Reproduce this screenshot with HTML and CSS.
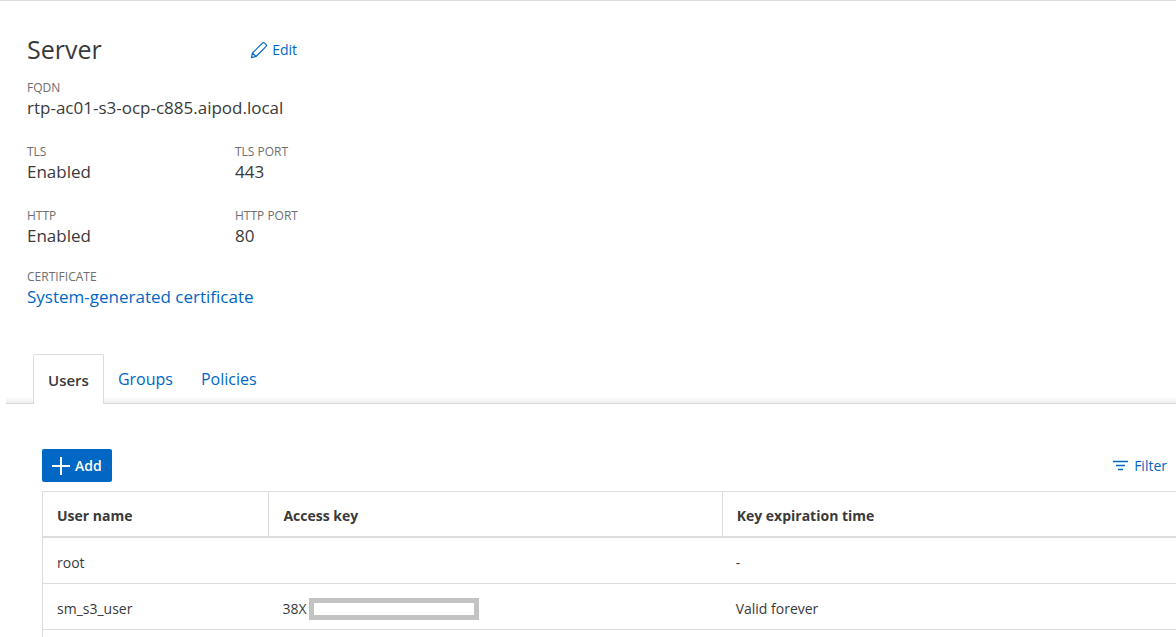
FILE: index.html
```html
<!DOCTYPE html>
<html lang="en">
<head>
<meta charset="utf-8">
<title>Server</title>
<link rel="stylesheet" href="styles.css">
</head>
<body>
<main class="page">
  <section class="server">
    <header class="server-head">
      <h1 class="title">Server</h1>
      <button class="link-button" type="button">
        <svg class="icon-edit" viewBox="0 0 18 18" aria-hidden="true"><path d="M1.4 16.6 2.5 12 12.4 2.1a1.6 1.6 0 0 1 2.2 0l1.3 1.3a1.6 1.6 0 0 1 0 2.2L6 15.5ZM2.5 12 6 15.5"/></svg>
        <span>Edit</span>
      </button>
    </header>
    <dl class="details">
      <div class="field wide"><dt>FQDN</dt><dd>rtp-ac01-s3-ocp-c885.aipod.local</dd></div>
      <div class="field"><dt>TLS</dt><dd>Enabled</dd></div>
      <div class="field"><dt>TLS PORT</dt><dd>443</dd></div>
      <div class="field"><dt>HTTP</dt><dd>Enabled</dd></div>
      <div class="field"><dt>HTTP PORT</dt><dd>80</dd></div>
      <div class="field wide"><dt>CERTIFICATE</dt><dd><a class="link" href="#certificate">System-generated certificate</a></dd></div>
    </dl>
  </section>

  <div class="tabs" role="tablist">
    <button class="tab active" type="button" role="tab" aria-selected="true">Users</button>
    <button class="tab" type="button" role="tab" aria-selected="false">Groups</button>
    <button class="tab" type="button" role="tab" aria-selected="false">Policies</button>
  </div>

  <section class="panel">
    <div class="toolbar">
      <button class="add-button" type="button">
        <svg class="icon-add" viewBox="0 0 18 18" aria-hidden="true"><path d="M9 0v18M0 9h18"/></svg>
        <span>Add</span>
      </button>
      <button class="link-button filter" type="button">
        <svg class="icon-filter" viewBox="0 0 16 12" aria-hidden="true"><path d="M0 1.5h15M3 5.5h9M5 9.5h5"/></svg>
        <span>Filter</span>
      </button>
    </div>
    <table class="users">
      <thead>
        <tr><th class="col-name" scope="col">User name</th><th class="col-key" scope="col">Access key</th><th scope="col">Key expiration time</th></tr>
      </thead>
      <tbody>
        <tr><td>root</td><td></td><td>-</td></tr>
        <tr><td>sm_s3_user</td><td><div class="key">38X<span class="redacted"></span></div></td><td>Valid forever</td></tr>
        <tr><td></td><td></td><td></td></tr>
      </tbody>
    </table>
  </section>
</main>
</body>
</html>
```
FILE: styles.css
```css
:root {
  --text: #3a3a3a;
  --muted: #6e6e6e;
  --blue: #0067c5;
  --line: #dddddd;
}

* {
  box-sizing: border-box;
}

body {
  margin: 0;
  color: var(--text);
  background: #fff;
  font: 15px/20px "Open Sans", "Noto Sans", sans-serif;
}

button {
  font: inherit;
  cursor: pointer;
}

.page {
  height: 100vh;
  overflow: hidden;
  border-top: 1px solid var(--line);
}

.server {
  padding: 31px 27px 0;
}

.server-head {
  display: flex;
  align-items: center;
  max-width: 270px;
  justify-content: space-between;
}

.title {
  margin: 0;
  padding-bottom: 2px;
  font-size: 25px;
  line-height: 34px;
  font-weight: 400;
}

.link-button {
  display: flex;
  align-items: center;
  gap: 4px;
  padding: 0;
  border: 0;
  background: none;
  color: var(--blue);
  font-size: 14px;
}

.icon-edit {
  width: 18px;
  height: 18px;
  fill: none;
  stroke: currentColor;
  stroke-width: 1.2;
  stroke-linejoin: round;
}

.details {
  display: grid;
  grid-template-columns: 208px 1fr;
  row-gap: 24px;
  margin: 11px 0 0;
}

.wide {
  grid-column: 1 / -1;
}

.wide:last-child {
  margin-top: -3px;
}

.field dt {
  color: var(--muted);
  font-size: 12px;
  line-height: 18px;
}

.field dd {
  margin: 0;
  font-size: 17px;
  line-height: 22px;
}

.link {
  color: var(--blue);
  text-decoration: none;
}

.tabs {
  display: flex;
  margin: 46px 0 0 6px;
  padding-left: 27px;
  border-bottom: 1px solid #d8d8d8;
  background: linear-gradient(to top, #eeeeee, #ffffff 6px);
}

.tab {
  height: 49px;
  padding: 0 13px;
  border: 1px solid transparent;
  border-bottom: 0;
  background: none;
  color: var(--blue);
  font-size: 16px;
}

.tab.active {
  height: 50px;
  margin-bottom: -1px;
  padding: 0 14px;
  border-color: var(--line);
  border-radius: 2px 2px 0 0;
  background: #fff;
  color: var(--text);
  font-size: 15px;
  font-weight: 600;
}

.panel {
  padding: 45px 0 0 42px;
}

.toolbar {
  display: flex;
  align-items: center;
  justify-content: space-between;
  margin-bottom: 9px;
  padding-right: 9px;
}

.add-button {
  display: flex;
  align-items: center;
  gap: 5px;
  height: 33px;
  padding: 0 10px;
  border: 0;
  border-radius: 2px;
  background: var(--blue);
  color: #fff;
  font-size: 14px;
  font-weight: 600;
}

.icon-add {
  width: 18px;
  height: 18px;
  stroke: currentColor;
  stroke-width: 2;
}

.icon-filter {
  width: 16px;
  height: 12px;
  stroke: currentColor;
  stroke-width: 1.3;
}

.filter {
  gap: 5px;
}

.users {
  width: 100%;
  table-layout: fixed;
  border-spacing: 0;
  border: 1px solid var(--line);
  border-width: 1px 0 0 1px;
  font-size: 14px;
}

.users th,
.users td {
  height: 46px;
  padding: 4px 14px 0;
  border-bottom: 1px solid var(--line);
  text-align: left;
}

.users th {
  border-bottom-width: 2px;
  font-weight: 700;
}

.users th + th {
  border-left: 1px solid var(--line);
}

.col-name {
  width: 19.9%;
}

.col-key {
  width: 40%;
}

.key {
  display: flex;
  align-items: center;
  gap: 2px;
}

.redacted {
  width: 170px;
  height: 22px;
  border: 5px solid #c3c3c3;
  background: #fff;
}
```
